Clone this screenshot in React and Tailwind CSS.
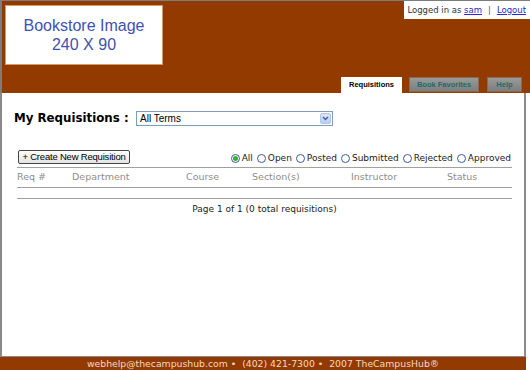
export default function App() {
  const verdana = { fontFamily: '"DejaVu Sans", Verdana, sans-serif' };
  const arial = { fontFamily: '"Liberation Sans", Arial, sans-serif' };
  const radios = ["All", "Open", "Posted", "Submitted", "Rejected", "Approved"];
  const cols = [
    ["Req #", "w-[55px]"],
    ["Department", "w-[114px]"],
    ["Course", "w-[66px]"],
    ["Section(s)", "w-[99px]"],
    ["Instructor", "w-[96px]"],
    ["Status", "flex-1"],
  ];
  return (
    <div className="w-[530px] h-[370px] flex flex-col bg-white overflow-hidden" style={verdana}>
      {/* Header */}
      <div className="h-[93px] bg-[#933a00] border-t border-l-2 border-[#7d7d7d] flex flex-col justify-between">
        <div className="flex justify-between items-start">
          <div className="mt-[4px] ml-[3px] w-[158px] h-[60px] bg-white border border-[#d59a6a] flex flex-col items-center justify-center text-[16px] leading-[19px] text-[#3f51b5]" style={arial}>
            <span>Bookstore Image</span>
            <span>240 X 90</span>
          </div>
          <div className="w-[126px] h-[18px] bg-white flex items-center justify-end pr-[4px] text-[8.5px] text-[#333] whitespace-nowrap">
            <span>Logged in as&nbsp;</span>
            <span className="text-[#2a2ad0] underline">sam</span>
            <span className="mx-[6px] text-[#555]">|</span>
            <span className="text-[#2a2ad0] underline">Logout</span>
          </div>
        </div>
        <div className="flex justify-end items-end pr-[8px]" style={arial}>
          <div className="w-[61px] h-[16px] bg-white flex items-center justify-center text-[7.5px] font-bold text-black">Requisitions</div>
          <div className="ml-[7px] mb-[1px] w-[70px] h-[15px] bg-gradient-to-b from-[#9a9a9a] to-[#7e7e7e] border border-[#8a6a50] flex items-center justify-center text-[7.5px] font-bold text-[#1d6b6b]">Book Favorites</div>
          <div className="ml-[8px] mb-[1px] w-[35px] h-[15px] bg-gradient-to-b from-[#9a9a9a] to-[#7e7e7e] border border-[#8a6a50] flex items-center justify-center text-[7.5px] font-bold text-[#1d6b6b]">Help</div>
        </div>
      </div>

      {/* Main */}
      <div className="flex-1 w-[526px] bg-white border-l-2 border-r-2 border-[#8a8a8a] flex flex-col pl-[15px] pr-[12px]">
        <div className="mt-[18px] flex items-center h-[15px] -ml-[3px]">
          <span className="w-[122px] text-[11.8px] font-bold text-black whitespace-nowrap">My Requisitions :</span>
          <div className="w-[197px] h-[15px] border border-[#7f9db9] flex items-center justify-between pl-[3px] pr-[1px] text-[10px] text-black" style={arial}>
            <span>All Terms</span>
            <span className="w-[11px] h-[11px] bg-gradient-to-b from-[#dbe7fb] to-[#b8cdf5] border border-[#b0c4ea] rounded-[2px] flex items-center justify-center">
              <svg width="7" height="5" viewBox="0 0 7 5"><path d="M1 1 L3.5 3.5 L6 1" stroke="#4d6185" strokeWidth="1.5" fill="none" /></svg>
            </span>
          </div>
        </div>

        <div className="mt-[24px] flex items-end justify-between h-[14px]">
          <div className="ml-[1px] w-[112px] h-[14px] rounded-[2px] border border-[#444] bg-gradient-to-b from-white to-[#e4e4e4] flex items-center justify-center text-[9.5px] text-black tracking-[-0.2px]" style={arial}>
            + Create New Requisition
          </div>
          <div className="flex items-center gap-[4px] text-[9px] text-[#222] mr-[1px] -mb-[1px]">
            {radios.map((r, i) => (
              <label key={r} className="flex items-center gap-[2px]">
                <span className="w-[9px] h-[9px] rounded-full border border-[#3b5b9a] bg-white flex items-center justify-center">
                  {i === 0 && <span className="w-[5px] h-[5px] rounded-full bg-[#2db52d]" />}
                </span>
                <span>{r}</span>
              </label>
            ))}
          </div>
        </div>

        <div className="mt-[3px] border-t border-[#a0a0a0] border-b h-[21px] flex items-center text-[9.5px] text-[#8e8e8e]">
          {cols.map(([c, w]) => (
            <span key={c} className={w}>{c}</span>
          ))}
        </div>
        <div className="h-[11px] border-b border-[#a0a0a0]" />
        <div className="mt-[4px] text-center text-[9px] text-[#222]">Page 1 of 1 (0 total requisitions)</div>
      </div>

      {/* Footer */}
      <div className="h-[14px] w-[526px] border-t border-[#8a8a8a] bg-[#933a00] flex items-center justify-center text-[9.3px] text-[#f3d9c2] whitespace-pre">
        webhelp@thecampushub.com •  (402) 421-7300 •  2007 TheCampusHub®
      </div>
    </div>
  );
}
